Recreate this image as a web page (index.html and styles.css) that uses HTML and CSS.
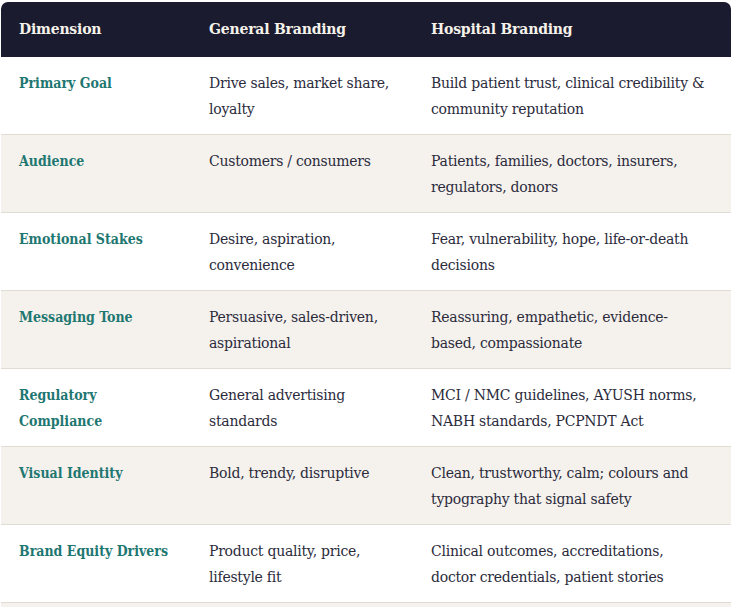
FILE: index.html
```html
<!DOCTYPE html>
<html>
<head>
<meta charset="utf-8">
<link rel="stylesheet" href="styles.css">
</head>
<body>
<div class="wrap">
<table class="cmp">
<thead>
<tr><th class="c1">Dimension</th><th class="c2">General Branding</th><th class="c3">Hospital Branding</th></tr>
</thead>
<tbody>
<tr><td class="dim">Primary Goal</td><td>Drive sales, market share, loyalty</td><td class="last">Build patient trust, clinical credibility &amp; community reputation</td></tr>
<tr class="alt"><td class="dim">Audience</td><td>Customers / consumers</td><td class="last">Patients, families, doctors, insurers, regulators, donors</td></tr>
<tr><td class="dim">Emotional Stakes</td><td>Desire, aspiration, convenience</td><td class="last">Fear, vulnerability, hope, life-or-death decisions</td></tr>
<tr class="alt"><td class="dim">Messaging Tone</td><td>Persuasive, sales-driven, aspirational</td><td class="last">Reassuring, empathetic, evidence-based, compassionate</td></tr>
<tr><td class="dim">Regulatory Compliance</td><td>General advertising standards</td><td class="last">MCI / NMC guidelines, AYUSH norms, NABH standards, PCPNDT Act</td></tr>
<tr class="alt"><td class="dim">Visual Identity</td><td>Bold, trendy, disruptive</td><td class="last">Clean, trustworthy, calm; colours and typography that signal safety</td></tr>
<tr><td class="dim">Brand Equity Drivers</td><td>Product quality, price, lifestyle fit</td><td class="last">Clinical outcomes, accreditations, doctor credentials, patient stories</td></tr>
<tr class="alt empty"><td></td><td></td><td class="last"></td></tr>
</tbody>
</table>
</div>
</body>
</html>
```
FILE: styles.css
```css
html, body {
  margin: 0;
  padding: 0;
  background: #ffffff;
}
body {
  font-family: "DejaVu Serif", "Liberation Serif", serif;
  color: #2b2b3c;
}
.wrap {
  margin: 2px 1px 0 1px;
  border-radius: 7px 7px 0 0;
  overflow: hidden;
}
.cmp {
  width: 100%;
  border-collapse: collapse;
  table-layout: fixed;
  font-size: 14px;
  line-height: 26px;
}
.c1 { width: 154px; }
.c2 { width: 186px; }
th {
  background: #1b1b2f;
  color: #f5f2ea;
  font-weight: bold;
  text-align: left;
  padding: 14px 18px 15px 18px;
  letter-spacing: -0.2px;
}
td {
  vertical-align: top;
  padding: 13px 18px 12px 18px;
  border-bottom: 1px solid #e0dbd3;
  letter-spacing: -0.25px;
}
td.last { padding-right: 24px; }
tr.alt td { background: #f5f2ed; }
tr.empty td { height: 52px; }
td.dim {
  color: #1f7772;
  font-weight: bold;
  font-family: "DejaVu Serif Condensed", "DejaVu Serif", serif;
  font-stretch: semi-condensed;
  letter-spacing: 0;
}
```
